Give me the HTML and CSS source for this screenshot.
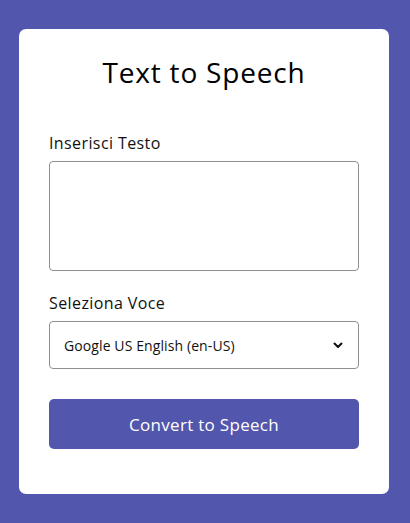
FILE: index.html
```html
<!DOCTYPE html>
<html lang="it">
<head>
<meta charset="utf-8">
<title>Text to Speech</title>
<link rel="stylesheet" href="styles.css">
</head>
<body>
<main class="card">
  <h1 class="title">Text to Speech</h1>
  <label class="label" for="text">Inserisci Testo</label>
  <textarea id="text" class="textarea"></textarea>
  <label class="label label-voice" for="voice">Seleziona Voce</label>
  <div class="select-wrap">
    <select id="voice" class="select">
      <option>Google US English (en-US)</option>
    </select>
    <svg class="chevron" width="10" height="7" viewBox="0 0 10 7"><path d="M1.5 1.5 L5 5 L8.5 1.5" fill="none" stroke="#111" stroke-width="2" stroke-linecap="round" stroke-linejoin="round"/></svg>
  </div>
  <button class="button" type="button">Convert to Speech</button>
</main>
</body>
</html>
```
FILE: styles.css
```css
* { box-sizing: border-box; }
html, body { height: 100%; }
body {
  margin: 0;
  background: #5256ac;
  font-family: "Open Sans", "DejaVu Sans", sans-serif;
  padding: 29px 0 0 19px;
}
.card {
  width: 370px;
  height: 465px;
  background: #fff;
  border-radius: 7px;
  padding: 25px 30px 45px;
  display: flex;
  flex-direction: column;
}
.title {
  margin: 0 0 42px;
  font-size: 28px;
  letter-spacing: 0.8px;
  font-weight: 400;
  line-height: 36px;
  text-align: center;
  color: #000;
}
.label {
  font-size: 16px;
  letter-spacing: 0.4px;
  line-height: 22px;
  color: #111;
  margin-bottom: 7px;
}
.label-voice { margin-top: 21px; }
.textarea {
  width: 310px;
  height: 110px;
  border: 1px solid #8f8f8f;
  border-radius: 4px;
  resize: none;
  margin: 0;
  font-family: inherit;
}
.select-wrap {
  position: relative;
  width: 310px;
  height: 48px;
}
.select {
  width: 100%;
  height: 100%;
  appearance: none;
  -webkit-appearance: none;
  background: #fff;
  border: 1px solid #8f8f8f;
  border-radius: 4px;
  padding: 0 14px;
  font-family: inherit;
  font-size: 14px;
  letter-spacing: 0.1px;
  color: #111;
}
.chevron {
  position: absolute;
  right: 16px;
  top: 21px;
  pointer-events: none;
}
.button {
  margin-top: 30px;
  width: 310px;
  height: 50px;
  border: none;
  border-radius: 5px;
  background: #5256ac;
  color: #fff;
  font-family: inherit;
  font-size: 17px;
  letter-spacing: 0.3px;
}
```
